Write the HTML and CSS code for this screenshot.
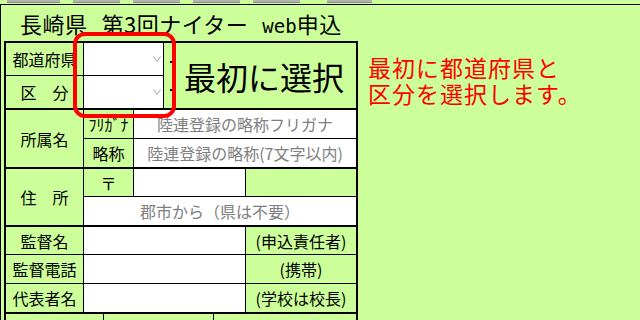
FILE: index.html
```html
<!DOCTYPE html>
<html lang="ja">

<head>
    <meta charset="UTF-8">
    <meta name="viewport" content="width=device-width, initial-scale=1.0">
    <title>長崎県 第3回ナイター web申込</title>
    <link rel="stylesheet" href="styles.css">
</head>

<body>
    <div class="tabs">
        <span class="tab first"></span>
        <span class="tab"></span>
        <span class="tab"></span>
        <span class="tab"></span>
        <span class="tab"></span>
        <span class="tab last"></span>
    </div>

    <div class="sheet">
        <h1 class="title">長崎県<span class="sp"></span>第3回ナイター<span class="sp"></span><span class="mono">web</span>申込</h1>

        <div class="layout">
            <div class="form">
                <!-- 都道府県・区分 -->
                <div class="section sec-top">
                    <div class="cell label">都道府県</div>
                    <div class="cell select">
                        <svg width="8" height="6" viewBox="0 0 8 6"><polyline points="0.5,0.5 4,5.5 7.5,0.5" fill="none" stroke="#a0a0a0" stroke-width="1"/></svg>
                    </div>
                    <div class="cell big">最初に選択</div>
                    <div class="cell label">区　分</div>
                    <div class="cell select">
                        <svg width="8" height="6" viewBox="0 0 8 6"><polyline points="0.5,0.5 4,5.5 7.5,0.5" fill="none" stroke="#a0a0a0" stroke-width="1"/></svg>
                    </div>
                </div>

                <!-- 所属名 -->
                <div class="section sec-club">
                    <div class="cell label span-rows">所属名</div>
                    <div class="cell">ﾌﾘｶﾞﾅ</div>
                    <div class="cell input wide">陸連登録の略称フリガナ</div>
                    <div class="cell">略称</div>
                    <div class="cell input wide">陸連登録の略称(7文字以内)</div>
                </div>

                <!-- 住所 -->
                <div class="section sec-addr">
                    <div class="cell label span-rows">住　所</div>
                    <div class="cell">〒</div>
                    <div class="cell input zip"></div>
                    <div class="cell"></div>
                    <div class="cell input full">郡市から（県は不要）</div>
                </div>

                <!-- 監督・代表者 -->
                <div class="section sec-staff">
                    <div class="cell label">監督名</div>
                    <div class="cell input mid"></div>
                    <div class="cell">(申込責任者)</div>
                    <div class="cell label">監督電話</div>
                    <div class="cell input mid"></div>
                    <div class="cell">(携帯)</div>
                    <div class="cell label">代表者名</div>
                    <div class="cell input mid"></div>
                    <div class="cell">(学校は校長)</div>
                </div>

                <div class="section sec-bottom">
                    <div class="cell"></div>
                    <div class="cell"></div>
                    <div class="cell"></div>
                </div>

                <div class="select-ring"></div>
            </div>

            <div class="note">
                <p class="note-line">最初に都道府県と</p>
                <p class="note-line">区分を選択します。</p>
            </div>
        </div>
    </div>
</body>

</html>
```

FILE: styles.css
```css
body {
    margin: 0;
    padding: 0;
    background: #ccff99;
    font-family: "Noto Sans CJK JP", sans-serif;
    color: #000;
    overflow: hidden;
}

/* 上部のタブ */
.tabs {
    display: flex;
    height: 3px;
    margin-bottom: 1px;
}

.tab {
    width: 47px;
    margin-left: 13px;
    background: #b4b4b4;
    border-bottom: 1px solid #8c8c8c;
    box-sizing: border-box;
}

.tab.first {
    width: 53px;
    margin-left: 7px;
}

.tab.last {
    width: 45px;
    margin-left: 27px;
}

.sheet {
    border-top: 1px solid #000;
    border-left: 1px solid #000;
    min-height: 330px;
}

.title {
    margin: 0;
    padding: 5px 0 0 19px;
    height: 26px;
    font-size: 22px;
    line-height: 26px;
    font-weight: normal;
    letter-spacing: 0.5px;
    white-space: nowrap;
}

.title .sp {
    display: inline-block;
    width: 14px;
}

.title .mono {
    font-family: "DejaVu Sans Mono", monospace;
    font-size: 19px;
    line-height: 20px;
    letter-spacing: 0;
}

.layout {
    display: flex;
    align-items: flex-start;
    margin-top: 5px;
    padding-left: 3px;
}

/* 入力表 */
.form {
    position: relative;
    width: 350px;
    padding: 2px;
    background: #000;
    display: flex;
    flex-direction: column;
    gap: 2px;
}

.section {
    display: grid;
    grid-template-columns: 77px 49px 29px 81px 110px;
    gap: 1px;
}

.cell {
    background: #ccff99;
    display: flex;
    align-items: center;
    justify-content: center;
    font-size: 16px;
    line-height: 20px;
    white-space: nowrap;
    overflow: hidden;
}

.input {
    background: #fff;
    color: #808080;
}

.sec-top {
    grid-template-rows: 32px 32px;
}

.select {
    grid-column: 2 / 4;
    background: #fff;
    justify-content: flex-end;
    padding-right: 2px;
}

.big {
    position: relative;
    grid-column: 4 / 6;
    grid-row: 1 / 3;
    font-size: 32px;
    line-height: 40px;
    padding-left: 8px;
}

/* 隠れたセレクトの端 */
.big::before {
    content: "";
    position: absolute;
    left: 6px;
    top: 18px;
    width: 3px;
    height: 2px;
    background: #000;
    box-shadow: 0 28px 0 #000;
}

.sec-club {
    grid-template-rows: 28px 28px;
}

.span-rows {
    grid-row: 1 / 3;
}

.wide {
    grid-column: 3 / 6;
}

.sec-addr {
    grid-template-rows: 27px 28px;
}

.zip {
    grid-column: 3 / 5;
}

.full {
    grid-column: 2 / 6;
}

.sec-staff {
    grid-template-rows: 27px 28px 28px;
}

.mid {
    grid-column: 2 / 5;
}

.sec-bottom {
    grid-template-columns: 97px 109px 142px;
    grid-template-rows: 28px;
}

.select-ring {
    position: absolute;
    left: 69px;
    top: -9px;
    width: 103px;
    height: 86px;
    box-sizing: border-box;
    border: 4px solid #ff0000;
    border-radius: 12px;
}

.note {
    margin: 13px 0 0 10px;
    color: #ff0000;
    font-size: 23px;
    letter-spacing: 1px;
    white-space: nowrap;
}

.note-line {
    margin: 0;
    height: 26px;
    line-height: 26px;
}
```
